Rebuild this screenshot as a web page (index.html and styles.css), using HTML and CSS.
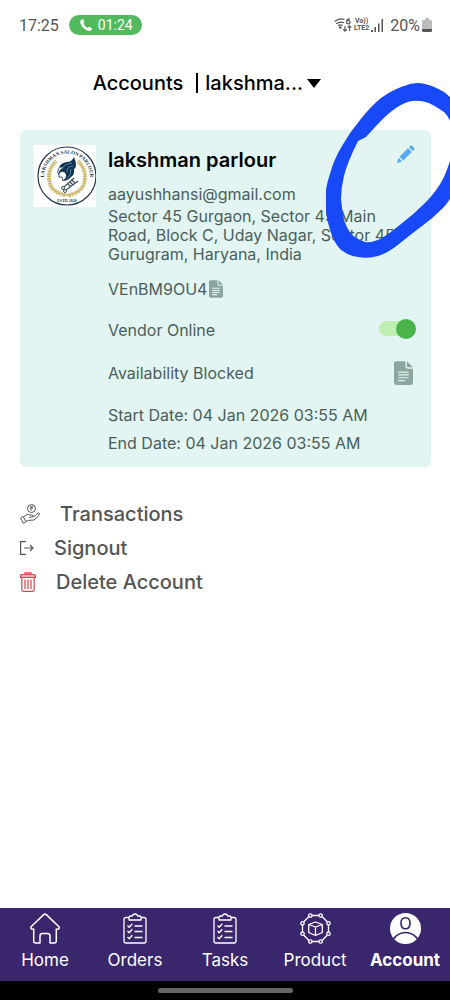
FILE: index.html
```html
<!DOCTYPE html>
<html lang="en">
<head>
  <meta charset="UTF-8">
  <meta name="viewport" content="width=device-width, initial-scale=1">
  <title>Accounts</title>
  <link rel="stylesheet" href="styles.css">
</head>
<body>

  <div class="statusBar">
    <span class="clock">17:25</span>
    <span class="callPill">
      <svg width="14" height="14" viewBox="0 0 14 14"><path fill="#fff" d="M3.6 1.2 1.8 2C.6 3.5 1.6 7 4.2 9.8S10.5 13.6 12.2 12.5L13 10.8Q13.2 10.300 12.7 10L10.3 8.9Q9.9 8.7 9.5 9.1L8.7 10Q6 8.8 4.3 5.6L5 4.8Q5.4 4.4 5.2 3.9L4.4 1.5Q4.1 1 3.6 1.2Z"/></svg>
      01:24
    </span>
    <span class="signals">
      <svg width="18" height="16" viewBox="0 0 18 16" fill="none" stroke="#555" stroke-width="1.2">
        <path d="M.6 4.5Q5.5.5 10.5 2.5M2.2 6.7Q6 4 10 5.8M4 8.8Q6.2 7.2 8.6 8.6"/>
        <circle cx="6.3" cy="10.5" r=".7" fill="#555"/>
        <path d="M11 9v5M9.2 12.3 11 14.2 12.8 12.3M15.5 14V8.8M13.7 10.6 15.5 8.8 17.3 10.6M15.8 1.7Q12.5 2 12.5 5.2A1.8 1.8 0 1 0 13 3.9"/>
      </svg>
      <span class="volte"><span>Vo))</span><span>LTE2</span></span>
      <svg width="13" height="13" viewBox="0 0 13 13" fill="#555"><path d="M0 11h2v2H0zM3.5 8h1.500v5H3.5zM7 4.5h1.500V13H7zM10.5 0H12v13h-1.500z"/></svg>
      <span class="percent">20%</span>
      <svg width="10" height="14" viewBox="0 0 10 14"><path fill="#bbb" d="M3 0h4v2h1.500Q10 2 10 3.500V12H0V3.500Q0 2 1.500 2H3z"/><path fill="#555" d="M0 11h10v1.500Q10 14 8.500 14h-7Q0 14 0 12.500z"/></svg>
    </span>
  </div>

  <header class="topBar">
    <h1>Accounts</h1>
    <span class="divider"></span>
    <select class="vendorSelect" aria-label="Vendor">
      <option>lakshma...</option>
    </select>
    <svg width="14" height="9" viewBox="0 0 14 9"><path d="M0 0h14L7 9z"/></svg>
  </header>

  <main>
    <section class="card">
      <svg class="logo" viewBox="0 0 62 62" role="img" aria-label="Lakshman Salon Parlour">
        <defs><path id="ring" d="M12 41A23 23 0 1 1 54 41"/></defs>
        <rect width="62" height="62" fill="#fff"/>
        <circle cx="33" cy="31" r="29" fill="none" stroke="#25364f" stroke-width="1.2"/>
        <text class="logoText"><textPath href="#ring" startOffset="50%" text-anchor="middle">LAKSHMAN SALON PARLOUR</textPath></text>
        <text class="logoYear" x="33" y="57" text-anchor="middle">ESTD 2020</text>
        <g fill="none" stroke="#cdb56a">
          <path d="M31 50Q15 47 15 32 15 23 22 16M35 50Q51 47 51 32 51 23 44 16" stroke-width="4" stroke-dasharray="1.6 .8"/>
          <path d="M31 50Q15 47 15 32 15 23 22 16M35 50Q51 47 51 32 51 23 44 16"/>
          <path d="M29 52Q33 47 37 52M29 49l8 3"/>
        </g>
        <path fill="#12304f" d="M40 12Q38 17 33 17 26 18 25 23L29 22Q25 25 24 30L27 27Q31 26 32 30 33 33 28 36 34 36 37 32 41 29 40 24 44 22 40 12Z"/>
        <path fill="none" stroke="#4f96ad" stroke-width=".9" d="M38 18Q30 19 28 24M39 21Q33 21 33 27M37 24Q37 30 33 34"/>
        <path fill="none" stroke="#12304f" stroke-width=".8" d="M25 23 23.500 27.500 25 29 25 32 28 32 29 36"/>
        <path fill="none" stroke="#3f4f60" stroke-width="1.2" d="M30 42 40 33M32 45 44 36M34 39 37 42M36 37 39 40M38 35 41 38"/>
        <circle cx="29" cy="43" r="1.5" fill="none" stroke="#3f4f60"/>
        <circle cx="31" cy="46" r="1.5" fill="none" stroke="#3f4f60"/>
      </svg>

      <div class="details">
        <div class="nameRow">
          <h2>lakshman parlour</h2>
          <button class="iconBtn" aria-label="Edit account">
            <svg width="18" height="18" viewBox="0 0 18 18" fill="#57aaf2"><path d="M0 18 1.5 12.8 5.2 16.5ZM2.5 11.7 11 3.2 14.8 7 6.3 15.5ZM12 2.2 13.7.6Q14.2.1 14.7.6L17.4 3.3Q17.9 3.8 17.4 4.3L15.8 6Z"/></svg>
          </button>
        </div>
        <p class="email">aayushhansi@gmail.com</p>
        <p class="address">Sector 45 Gurgaon, Sector 45 Main Road, Block C, Uday Nagar, Sector 45 Gurugram, Haryana, India</p>
        <div class="codeRow">
          <span>VEnBM9OU4</span>
          <button class="iconBtn" aria-label="Copy code">
            <svg width="14" height="18" viewBox="0 0 20 25"><path fill="#8ba59f" d="M2.5 0H12v5.5Q12 8 14.5 8H20v14.5Q20 25 17.5 25h-15Q0 25 0 22.5v-20Q0 0 2.5 0ZM13.5 0 20 6.5H15Q13.5 6.5 13.5 5Z"/><path stroke="#e2f5f2" stroke-width="1.5" d="M4.5 11.5h11M4.5 14.5h11M4.5 17.5h11M4.5 20.5h7"/></svg>
          </button>
        </div>
        <div class="optionRow">
          <label for="vendorOnline">Vendor Online</label>
          <input type="checkbox" id="vendorOnline" class="toggle" checked>
        </div>
        <div class="optionRow blockedRow">
          <span>Availability Blocked</span>
          <button class="iconBtn" aria-label="Blocked dates">
            <svg width="19" height="24" viewBox="0 0 20 25"><path fill="#8ba59f" d="M2.5 0H12v5.5Q12 8 14.5 8H20v14.5Q20 25 17.5 25h-15Q0 25 0 22.5v-20Q0 0 2.5 0ZM13.5 0 20 6.5H15Q13.5 6.5 13.5 5Z"/><path stroke="#e2f5f2" stroke-width="1.3" d="M4.5 11.5h11M4.5 14.5h11M4.5 17.5h11M4.5 20.5h7"/></svg>
          </button>
        </div>
        <p class="date">Start Date: 04 Jan 2026 03:55 AM</p>
        <p class="date">End Date: 04 Jan 2026 03:55 AM</p>
      </div>
    </section>

    <nav class="menu">
      <a href="#transactions">
        <svg width="20" height="20" viewBox="0 0 20 20" fill="none" stroke="#555">
          <circle cx="11.5" cy="4.5" r="4"/>
          <path stroke-width=".8" d="M9.8 2.7h3.5M9.8 4h3.5M10.5 2.7Q13 3 12 4.5L10.2 5 12 6.7"/>
          <path stroke-linejoin="round" d="M.5 14 3 12.3 6 17.8 3.5 19.5ZM3.5 13.2 6 11Q7.5 9.8 9.5 11H12Q13.5 11.2 13 12.7L9 13.5M13 12.7Q15.5 12 17 9.8 18.5 8.2 19.5 9.5 18.5 12.5 15.5 15 14 16.5 11 16.2 8 16 6 17.5"/>
        </svg>
        <span>Transactions</span>
      </a>
      <a href="#signout">
        <svg width="14" height="14" viewBox="0 0 14 14" fill="none" stroke="#555" stroke-width="1.2"><path d="M6 .6H.6v12.8H6M4 7h9M10 4 13 7 10 10"/></svg>
        <span>Signout</span>
      </a>
      <a href="#delete">
        <svg width="16" height="20" viewBox="0 0 16 20" fill="none" stroke="#cf4a4e" stroke-width="1.2"><path fill="#f8d5d6" d="M.6 3.6Q.6 2.6 1.6 2.6H14.4Q15.4 2.6 15.4 3.6V5.4H.6ZM5 2.6V.8H11V2.6"/><path d="M1.8 5.4V17.5Q1.8 19.4 3.5 19.4H12.5Q14.2 19.4 14.2 17.5V5.4M5 7.5V17M8 7.5V17M11 7.5V17"/></svg>
        <span>Delete Account</span>
      </a>
    </nav>
  </main>

  <nav class="tabBar">
    <a href="#home">
      <svg width="30" height="31" viewBox="0 0 30 31" fill="none" stroke="#fff" stroke-width="1.5" stroke-linejoin="round"><path d="M15 1Q14.3 1 13.7 1.6L1.3 13.5Q.3 14.8 1.5 15.8 2.3 16.4 3.7 16V28Q3.7 30 5.7 30H10V23Q10 20.5 12.5 20.5H17.5Q20 20.5 20 23V30H24.3Q26.3 30 26.3 28V16Q27.7 16.4 28.5 15.8 29.7 14.8 28.7 13.5L16.3 1.6Q15.7 1 15 1Z"/></svg>
      Home
    </a>
    <a href="#orders">
      <svg width="24" height="31" viewBox="0 0 24 31" fill="none" stroke="#fff" stroke-width="1.3" stroke-linejoin="round"><path d="M6 4.5H3Q1 4.5 1 6.5V28Q1 30 3 30H21Q23 30 23 28V6.5Q23 4.5 21 4.5H18M6 7V4.5Q6 3 7.5 3H9.3Q9.8 1 12 1T14.7 3H16.5Q18 3 18 4.5V7ZM11.5 13H19.5M11.5 18.5H19.5M11.5 24.5H19.5M4.5 12.5 6.2 14.2 9.3 10.8M4.5 18 6.2 19.7 9.3 16.3M4.5 24 6.2 25.7 9.3 22.3"/></svg>
      Orders
    </a>
    <a href="#tasks">
      <svg width="24" height="31" viewBox="0 0 24 31" fill="none" stroke="#fff" stroke-width="1.3" stroke-linejoin="round"><path d="M6 4.5H3Q1 4.5 1 6.5V28Q1 30 3 30H21Q23 30 23 28V6.5Q23 4.5 21 4.5H18M6 7V4.5Q6 3 7.5 3H9.3Q9.8 1 12 1T14.7 3H16.5Q18 3 18 4.5V7ZM11.5 13H19.5M11.5 18.5H19.5M11.5 24.5H19.5M4.5 12.5 6.2 14.2 9.3 10.8M4.5 18 6.2 19.7 9.3 16.3M4.5 24 6.2 25.7 9.3 22.3"/></svg>
      Tasks
    </a>
    <a href="#product">
      <svg width="31" height="31" viewBox="0 0 31 31" fill="none" stroke="#fff" stroke-width="1.3" stroke-linejoin="round">
        <path d="M12 2.5H19M22.3 3.8 27.2 8.7M28.5 12V19M27.2 22.3 22.3 27.2M19 28.5H12M8.7 27.2 3.8 22.3M2.5 19V12M3.8 8.7 8.7 3.8"/>
        <circle cx="10.3" cy="2.5" r="1.7"/><circle cx="20.7" cy="2.5" r="1.7"/><circle cx="28.5" cy="10.3" r="1.7"/><circle cx="28.5" cy="20.7" r="1.7"/>
        <circle cx="20.7" cy="28.5" r="1.7"/><circle cx="10.3" cy="28.5" r="1.7"/><circle cx="2.5" cy="20.7" r="1.7"/><circle cx="2.5" cy="10.3" r="1.7"/>
        <path d="M15.5 9 22.3 11.5V19.5L15.5 22.5 8.7 19.5V11.5ZM8.7 11.5 15.5 14 22.3 11.5M15.5 14V22.5"/>
      </svg>
      Product
    </a>
    <a href="#account" class="active">
      <svg width="31" height="31" viewBox="0 0 31 31"><circle cx="15.5" cy="15.5" r="15.5" fill="#fff"/><path fill="none" stroke="#38246b" stroke-width="1.6" d="M15.5 4.8Q20 4.8 20 10 20 15.8 15.5 15.8T11 10Q11 4.8 15.5 4.8ZM3.5 26Q8 19.5 15.5 19.5T27.5 26"/></svg>
      Account
    </a>
  </nav>
  <div class="gestureBar"><span></span></div>

  <!-- hand-drawn ring round the edit button -->
  <svg class="marker" width="124" height="180" viewBox="326 80 124 180">
    <path fill="#1849f8" fill-rule="evenodd" d="M404 86Q392 90 381 98 370 107 360 120 350 132 342 146 334 159 330 174 325 188 325 202 326 217 330 230 334 243 341 250 349 256 358 257 368 259 378 256 388 253 399 244 410 235 422 226 433 218 443 208 453 197 459 181 464 165 464 145 464 125 459 112 453 98 444 92 434 86 425 84 415 81 404 86ZM396 108Q387 114 377 125L366 137 358 141Q347 163 344 176 341 188 341 199 342 210 344 220 347 229 352 235 358 240 365 242 373 243 382 238 390 233 401 224 413 215 425 203 437 191 444 177 450 163 453 150 456 138 453 128 450 118 444 112 437 107 429 103 420 100 412 101 405 102 396 108Z"/>
  </svg>

</body>
</html>
```
FILE: styles.css
```css
* {
  box-sizing: border-box;
}

body {
  margin: 0;
  min-height: 100vh;
  display: flex;
  flex-direction: column;
  position: relative;
  overflow-x: hidden;
  background: #fff;
  color: #4b5e5b;
  font-family: Inter, "Liberation Sans", sans-serif;
  font-size: 16px;
}

h1, h2, p {
  margin: 0;
}

svg {
  flex: none;
}

a {
  text-decoration: none;
}

/* phone status bar */
.statusBar {
  height: 50px;
  padding: 0 18px 0 19px;
  display: flex;
  align-items: center;
  gap: 10px;
  color: #555;
  font-family: Roboto, sans-serif;
}

.callPill {
  height: 20px;
  padding: 0 9px 0 10px;
  display: flex;
  align-items: center;
  gap: 5px;
  border-radius: 10px;
  background: #52b95e;
  color: #fff;
  font-size: 14px;
}

.signals {
  margin-left: auto;
  display: flex;
  align-items: center;
  gap: 2px;
}

.volte {
  display: flex;
  flex-direction: column;
  align-items: center;
  font-size: 7px;
  font-weight: 700;
  line-height: 7px;
}

.percent {
  margin-left: 4px;
}

/* page title and vendor picker */
.topBar {
  height: 66px;
  display: flex;
  align-items: center;
  justify-content: center;
  padding-right: 36px;
  color: #000;
}

.topBar h1 {
  font-size: 20px;
  font-weight: 500;
}

.divider {
  width: 2px;
  height: 20px;
  margin: 0 7px 0 13px;
  background: #000;
}

.vendorSelect {
  appearance: none;
  border: 0;
  padding: 0;
  margin-right: 4px;
  background: none;
  color: #000;
  font: 500 20px Inter, "Liberation Sans", sans-serif;
}

main {
  flex: 1;
  padding: 14px 19px 0 20px;
}

/* vendor card */
.card {
  display: flex;
  align-items: flex-start;
  gap: 12px;
  padding: 15px 14px 10px;
  border-radius: 6px;
  background: #e2f5f2;
}

.logo {
  width: 62px;
  height: 62px;
}

.logoText {
  fill: #25364f;
  font: 700 5px "Liberation Serif", serif;
}

.logoYear {
  fill: #25364f;
  font: 700 4px "Liberation Serif", serif;
}

.details {
  flex: 1;
  min-width: 0;
}

.nameRow,
.optionRow {
  display: flex;
  align-items: center;
  justify-content: space-between;
}

.nameRow {
  height: 30px;
  padding-right: 2px;
}

.nameRow h2 {
  color: #000;
  font-size: 20px;
  font-weight: 600;
}

.iconBtn {
  display: flex;
  padding: 0;
  border: 0;
  background: none;
  cursor: pointer;
}

.nameRow .iconBtn {
  align-self: flex-start;
}

.email {
  margin-top: 9px;
  line-height: 20px;
}

.address {
  margin-top: 3px;
  line-height: 19px;
}

.codeRow {
  display: flex;
  align-items: center;
  gap: 2px;
  height: 20px;
  margin-top: 15px;
}

.optionRow {
  height: 24px;
  margin-top: 19px;
}

.blockedRow {
  padding-right: 4px;
}

.toggle {
  appearance: none;
  display: flex;
  align-items: center;
  justify-content: flex-end;
  width: 37px;
  height: 15px;
  margin: 0 1px 3px 0;
  border-radius: 8px;
  background: #bfefae;
}

.toggle::before {
  content: "";
  width: 20px;
  height: 20px;
  border-radius: 50%;
  background: #4ab34a;
}

.toggle:not(:checked) {
  justify-content: flex-start;
}

.date {
  line-height: 28px;
}

.blockedRow + .date {
  margin-top: 16px;
}

/* account links */
.menu {
  display: flex;
  flex-direction: column;
  padding-top: 30px;
}

.menu a {
  display: flex;
  align-items: center;
  gap: 20px;
  height: 34px;
  color: #555;
  font-size: 20px;
  font-weight: 500;
}

/* bottom tabs */
.tabBar {
  display: flex;
  height: 73px;
  background: #3a266d;
}

.tabBar a {
  flex: 1 1 0;
  display: flex;
  flex-direction: column;
  align-items: center;
  gap: 6px;
  padding-top: 5px;
  color: #fff;
  font-size: 17px;
  line-height: 20px;
}

.tabBar .active {
  font-weight: 700;
}

.gestureBar {
  display: flex;
  align-items: center;
  justify-content: center;
  height: 19px;
  background: #000;
}

.gestureBar span {
  width: 30%;
  height: 5px;
  border-radius: 3px;
  background: #666;
}

.marker {
  position: absolute;
  top: 80px;
  right: 0;
  pointer-events: none;
}
```
